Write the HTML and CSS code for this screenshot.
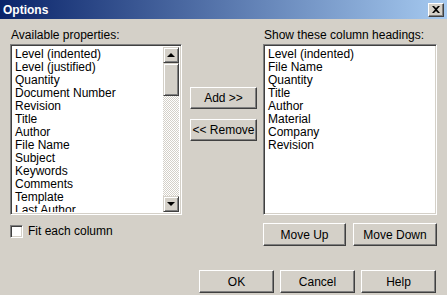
FILE: index.html
```html
<!DOCTYPE html>
<html lang="en">
<head>
  <meta charset="UTF-8">
  <title>Options</title>
  <link rel="stylesheet" href="styles.css">
</head>
<body>

  <div class="dialog">
    <div class="titlebar">
      <span class="title">Options</span>
      <button class="close-btn" type="button">
        <svg width="8" height="7" viewBox="0 0 8 7"><path d="M0 0h2l2 2 2-2h2L5 3.5 8 7H6L4 5 2 7H0l3-3.5z" fill="#000"/></svg>
      </button>
    </div>

    <div class="content">
      <div class="main-row">
        <div class="col-left">
          <div class="label">Available properties:</div>
          <div class="listbox available">
            <ul class="items">
              <li>Level (indented)</li>
              <li>Level (justified)</li>
              <li>Quantity</li>
              <li>Document Number</li>
              <li>Revision</li>
              <li>Title</li>
              <li>Author</li>
              <li>File Name</li>
              <li>Subject</li>
              <li>Keywords</li>
              <li>Comments</li>
              <li>Template</li>
              <li>Last Author</li>
            </ul>
            <div class="scrollbar">
              <div class="sb-btn"><span class="arrow-up"></span></div>
              <div class="sb-thumb"></div>
              <div class="sb-track"></div>
              <div class="sb-btn"><span class="arrow-down"></span></div>
            </div>
          </div>
          <label class="check-row">
            <span class="checkbox"></span>
            <span>Fit each column</span>
          </label>
        </div>

        <div class="col-mid">
          <button class="btn add-btn" type="button">Add &gt;&gt;</button>
          <button class="btn remove-btn" type="button">&lt;&lt; Remove</button>
        </div>

        <div class="col-right">
          <div class="label">Show these column headings:</div>
          <div class="listbox shown">
            <ul class="items">
              <li>Level (indented)</li>
              <li>File Name</li>
              <li>Quantity</li>
              <li>Title</li>
              <li>Author</li>
              <li>Material</li>
              <li>Company</li>
              <li>Revision</li>
            </ul>
          </div>
          <div class="move-row">
            <button class="btn move-up" type="button">Move Up</button>
            <button class="btn move-down" type="button">Move Down</button>
          </div>
        </div>
      </div>

      <div class="footer">
        <button class="btn ok-btn" type="button">OK</button>
        <button class="btn" type="button">Cancel</button>
        <button class="btn" type="button">Help</button>
      </div>
    </div>
  </div>

</body>
</html>
```

FILE: styles.css
```css
html {
  background: #d4d0c8;
}

*, *:before, *:after {
  box-sizing: border-box;
}

body {
  margin: 0;
  font-family: "Liberation Sans", Arial, sans-serif;
  font-size: 12px;
  color: #000;
}

.dialog {
  width: 447px;
  height: 295px;
  background: #d4d0c8;
}

.titlebar {
  height: 19px;
  display: flex;
  align-items: center;
  justify-content: space-between;
  padding: 0 3px 0 3px;
  background: linear-gradient(to right, #0a246a, #a6caf0);
}

.title {
  color: #fff;
  font-weight: bold;
  font-size: 12px;
}

.close-btn {
  width: 16px;
  height: 14px;
  padding: 0;
  display: flex;
  align-items: center;
  justify-content: center;
  background: #d4d0c8;
  border: 1px solid;
  border-color: #fff #404040 #404040 #fff;
  box-shadow: inset -1px -1px #808080;
}

.content {
  padding: 10px 0 0 10px;
}

.main-row {
  display: flex;
}

.label {
  height: 13px;
  line-height: 13px;
  margin-bottom: 2px;
  padding-left: 1px;
}

.listbox {
  height: 171px;
  background: #fff;
  border: 1px solid;
  border-color: #808080 #fff #fff #808080;
  box-shadow: inset 1px 1px #404040, inset -1px -1px #d4d0c8;
  padding: 2px;
  display: flex;
  overflow: hidden;
}

.available {
  width: 172px;
}

.shown {
  width: 174px;
}

.items {
  flex: 1;
  margin: 0;
  padding: 1px 0 0 2px;
  list-style: none;
  line-height: 13px;
  white-space: nowrap;
  overflow: hidden;
}

.scrollbar {
  width: 16px;
  display: flex;
  flex-direction: column;
}

.sb-btn,
.sb-thumb {
  background: #d4d0c8;
  border: 1px solid;
  border-color: #d4d0c8 #404040 #404040 #d4d0c8;
  box-shadow: inset 1px 1px #fff, inset -1px -1px #808080;
}

.sb-btn {
  height: 16px;
  display: flex;
  align-items: center;
  justify-content: center;
}

.sb-thumb {
  height: 33px;
}

.sb-track {
  flex: 1;
  background-color: #fff;
  background-image: repeating-conic-gradient(#d4d0c8 0 25%, #fff 0 50%);
  background-size: 2px 2px;
}

.arrow-up,
.arrow-down {
  width: 0;
  height: 0;
  border-left: 4px solid transparent;
  border-right: 4px solid transparent;
}

.arrow-up {
  border-bottom: 4px solid #000;
}

.arrow-down {
  border-top: 4px solid #000;
}

.check-row {
  display: flex;
  align-items: center;
  gap: 5px;
  margin-top: 9px;
}

.checkbox {
  width: 13px;
  height: 13px;
  background: #fff;
  border: 1px solid;
  border-color: #808080 #fff #fff #808080;
  box-shadow: inset 1px 1px #404040, inset -1px -1px #d4d0c8;
}

.col-mid {
  width: 67px;
  margin: 58px 6px 0 8px;
  display: flex;
  flex-direction: column;
  gap: 10px;
}

.btn {
  height: 23px;
  padding: 0;
  font-family: inherit;
  font-size: 12px;
  color: #000;
  background: #d4d0c8;
  border: 1px solid;
  border-color: #fff #404040 #404040 #fff;
  box-shadow: inset -1px -1px #808080, inset 1px 1px #d4d0c8;
}

.col-mid .btn {
  height: 22px;
}

.move-row {
  display: flex;
  gap: 7px;
  margin-top: 8px;
}

.move-up {
  width: 83px;
}

.move-down {
  width: 84px;
}

.footer {
  display: flex;
  justify-content: flex-end;
  gap: 6px;
  margin-top: 24px;
  padding-right: 11px;
}

.footer .btn {
  width: 75px;
}
```
